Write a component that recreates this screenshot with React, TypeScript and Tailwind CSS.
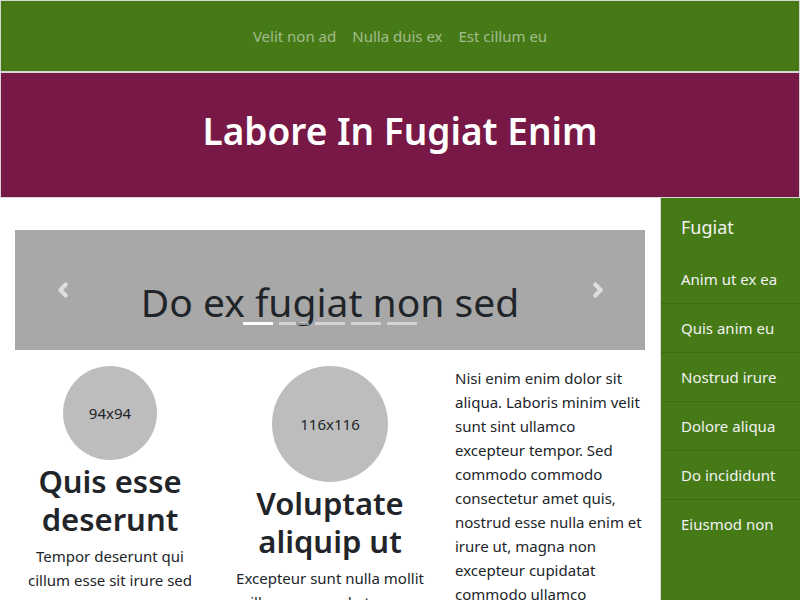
import { ChevronLeft, ChevronRight } from 'lucide-react'

const navLinks = ['Velit non ad', 'Nulla duis ex', 'Est cillum eu']
const sideItems = ['Anim ut ex ea', 'Quis anim eu', 'Nostrud irure', 'Dolore aliqua', 'Do incididunt', 'Eiusmod non']

const Card = ({ size, title, text }: { size: number; title: string[]; text: string }) => (
  <div className="flex flex-col items-center px-[15px] text-center">
    <div
      className="flex items-center justify-center rounded-full bg-[#bdbdbd] text-[15px] text-[#212529]"
      style={{ width: size, height: size }}
    >
      {size}x{size}
    </div>
    <h2 className="mt-[2px] text-[31px] leading-[38px] font-semibold text-[#212529]">
      {title[0]}
      <br />
      {title[1]}
    </h2>
    <p className="mt-[6px] text-[15px] leading-6 text-[#212529]">{text}</p>
  </div>
)

export default function App() {
  return (
    <div className="h-[600px] w-[800px] overflow-hidden bg-white font-['Noto_Sans',sans-serif]">
      <header className="flex h-[72px] items-center justify-center gap-4 border border-[#d6d6d6] bg-[#467a17]">
        {navLinks.map((l) => (
          <a key={l} className="text-[15px] text-white/50">
            {l}
          </a>
        ))}
      </header>
      <div className="flex h-[126px] items-center justify-center border border-[#d6d6d6] bg-[#781846] pb-2">
        <h1 className="text-[37px] font-semibold text-white">Labore In Fugiat Enim</h1>
      </div>
      <div className="flex">
        <main className="w-[660px] pt-8">
          <div className="px-[15px]">
            <div className="relative flex h-[120px] items-center justify-center bg-[#a8a8a8]">
              <h3 className="mt-6 text-[39px] text-[#212529]">Do ex fugiat non sed</h3>
              <ChevronLeft className="absolute top-[49px] left-[37px] text-[#dedede]" size={22} strokeWidth={4.5} />
              <ChevronRight className="absolute top-[49px] right-[36px] text-[#dedede]" size={22} strokeWidth={4.5} />
              <div className="absolute bottom-[25px] left-0 flex w-full justify-center gap-[6px]">
                {[0, 1, 2, 3, 4].map((i) => (
                  <span key={i} className={`h-[3px] w-[30px] ${i === 0 ? 'bg-white' : 'bg-white/50'}`} />
                ))}
              </div>
            </div>
          </div>
          <div className="grid grid-cols-3 pt-4">
            <Card size={94} title={['Quis esse', 'deserunt']} text="Tempor deserunt qui cillum esse sit irure sed magna amet" />
            <Card size={116} title={['Voluptate', 'aliquip ut']} text="Excepteur sunt nulla mollit cillum commodo tempor do" />
            <div className="px-[15px]">
              <p className="text-[15px] leading-6 text-[#212529]">
                Nisi enim enim dolor sit aliqua. Laboris minim velit sunt sint ullamco excepteur tempor. Sed commodo commodo consectetur amet quis, nostrud esse nulla enim et irure ut, magna non excepteur cupidatat commodo ullamco
              </p>
            </div>
          </div>
        </main>
        <aside className="h-[402px] flex-1 border-l border-[#d6d6d6] bg-[#467a17] text-[#f2f2f2]">
          <div className="px-5 pt-4 pb-[14px] text-[18px]">Fugiat</div>
          {sideItems.map((s, i) => (
            <div key={s} className={`px-5 py-3 text-[15px] leading-6 ${i > 0 ? 'border-t border-[#3d6a14]' : ''}`}>
              {s}
            </div>
          ))}
        </aside>
      </div>
    </div>
  )
}
